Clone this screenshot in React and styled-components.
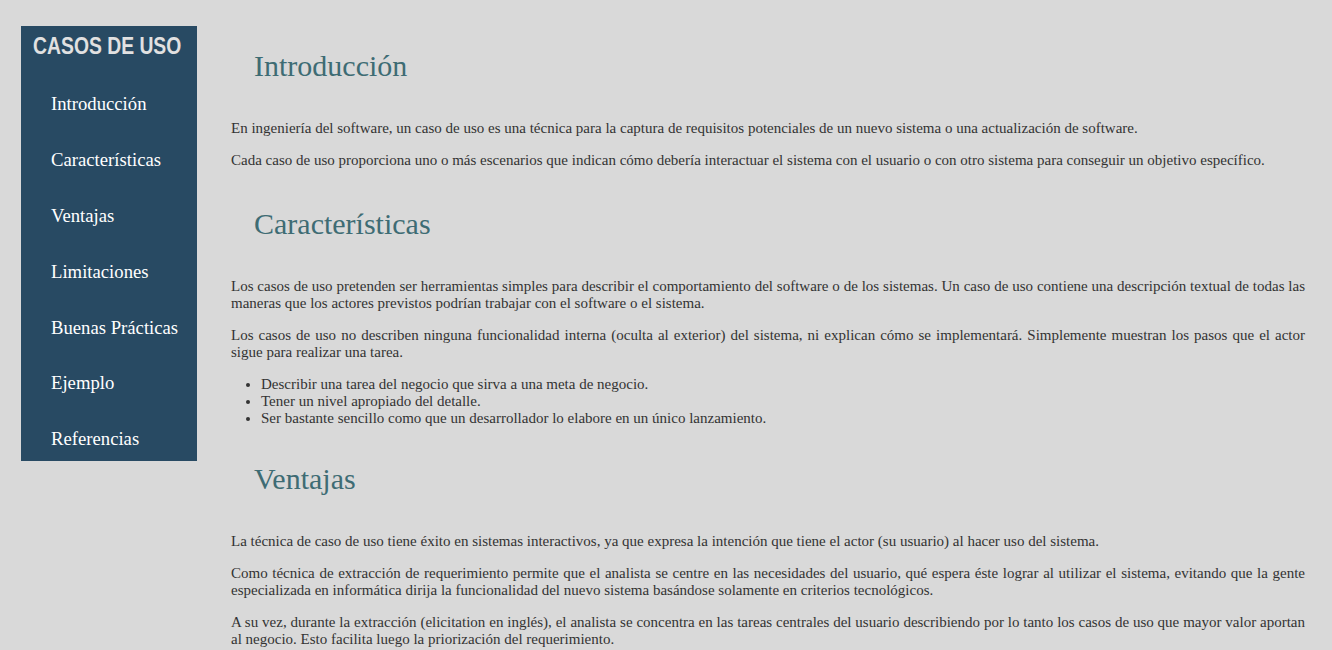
import styled, { createGlobalStyle } from "styled-components";

const GlobalStyle = createGlobalStyle`
  html, body {
    margin: 0;
    padding: 0;
    background: #d9d9d9;
  }
  body {
    font-family: "Liberation Serif", "Times New Roman", serif;
    color: #333333;
  }
`;

const Page = styled.div`
  display: flex;
  align-items: flex-start;
  padding: 26px 27px 0 21px;
`;

const Sidebar = styled.nav`
  flex: 0 0 176px;
  background: #284a63;
`;

const Title = styled.h1`
  margin: 0;
  height: 50px;
  padding-top: 7px;
  box-sizing: border-box;
  text-align: center;
  font-family: "Liberation Sans", Arial, sans-serif;
  font-weight: bold;
  font-size: 23px;
  line-height: 26px;
  color: #e1e1e1;
`;

// the title face is a condensed gothic; squeeze the sans to fit
const Squeeze = styled.span`
  display: inline-block;
  transform: scaleX(0.84);
  transform-origin: center;
  margin-left: -7px;
  margin-right: -3px;
`;

const NavList = styled.ul`
  list-style: none;
  margin: 0;
  padding: 0;
`;

const NavItem = styled.li`
  &:last-child a {
    padding-bottom: 12px;
  }
`;

const NavLink = styled.a`
  display: block;
  padding: 17.4px 0 17.4px 30px;
  font-size: 18.7px;
  line-height: 21px;
  color: #ffffff;
  text-decoration: none;
`;

const Main = styled.main`
  flex: 1;
  margin-left: 34px;
`;

const Heading = styled.h2`
  margin: ${(p) => p.$top}px 0 37px;
  padding-left: 23px;
  font-weight: normal;
  font-size: 30px;
  line-height: 34px;
  color: #3e6c74;
`;

const Para = styled.p`
  margin: 15px 0;
  font-size: 15px;
  line-height: 17px;
  text-align: justify;
`;

const Bullets = styled.ul`
  margin: 15px 0;
  padding-left: 30px;
  font-size: 15px;
  line-height: 17px;
`;

const menu = [
  "Introducción",
  "Características",
  "Ventajas",
  "Limitaciones",
  "Buenas Prácticas",
  "Ejemplo",
  "Referencias",
];

export default function App() {
  return (
    <>
      <GlobalStyle />
      <Page>
        <Sidebar>
          <Title>
            <Squeeze>CASOS DE USO</Squeeze>
          </Title>
          <NavList>
            {menu.map((m) => (
              <NavItem key={m}>
                <NavLink href="#">{m}</NavLink>
              </NavItem>
            ))}
          </NavList>
        </Sidebar>
        <Main>
          <Heading $top={23}>Introducción</Heading>
          <Para>
            En ingeniería del software, un caso de uso es una técnica para la captura de requisitos
            potenciales de un nuevo sistema o una actualización de software.
          </Para>
          <Para>
            Cada caso de uso proporciona uno o más escenarios que indican cómo debería interactuar el
            sistema con el usuario o con otro sistema para conseguir un objetivo específico.
          </Para>

          <Heading $top={38}>Características</Heading>
          <Para>
            Los casos de uso pretenden ser herramientas simples para describir el comportamiento del
            software o de los sistemas. Un caso de uso contiene una descripción textual de todas las
            maneras que los actores previstos podrían trabajar con el software o el sistema.
          </Para>
          <Para>
            Los casos de uso no describen ninguna funcionalidad interna (oculta al exterior) del
            sistema, ni explican cómo se implementará. Simplemente muestran los pasos que el actor
            sigue para realizar una tarea.
          </Para>
          <Bullets>
            <li>Describir una tarea del negocio que sirva a una meta de negocio.</li>
            <li>Tener un nivel apropiado del detalle.</li>
            <li>Ser bastante sencillo como que un desarrollador lo elabore en un único lanzamiento.</li>
          </Bullets>

          <Heading $top={34.5}>Ventajas</Heading>
          <Para>
            La técnica de caso de uso tiene éxito en sistemas interactivos, ya que expresa la intención
            que tiene el actor (su usuario) al hacer uso del sistema.
          </Para>
          <Para>
            Como técnica de extracción de requerimiento permite que el analista se centre en las
            necesidades del usuario, qué espera éste lograr al utilizar el sistema, evitando que la
            gente especializada en informática dirija la funcionalidad del nuevo sistema basándose
            solamente en criterios tecnológicos.
          </Para>
          <Para>
            A su vez, durante la extracción (elicitation en inglés), el analista se concentra en las
            tareas centrales del usuario describiendo por lo tanto los casos de uso que mayor valor
            aportan al negocio. Esto facilita luego la priorización del requerimiento.
          </Para>
        </Main>
      </Page>
    </>
  );
}
